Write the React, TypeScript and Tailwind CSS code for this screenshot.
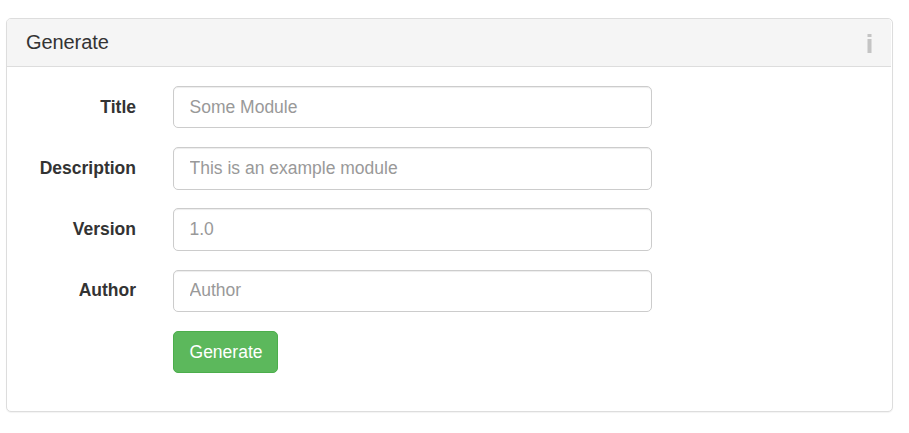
const fields = [
  { label: 'Title', placeholder: 'Some Module' },
  { label: 'Description', placeholder: 'This is an example module' },
  { label: 'Version', placeholder: '1.0' },
  { label: 'Author', placeholder: 'Author' },
];

export default function App() {
  return (
    <div className="h-[433px] bg-white pl-[6px] pr-4 pt-[18px] font-['Liberation_Sans',Arial,sans-serif] text-[#333]">
      <section className="h-[394px] rounded-[5px] border border-[#ddd] bg-white shadow-[0_1px_1px_rgba(0,0,0,0.05)]">
        <header className="mr-px flex h-[48px] items-start justify-between rounded-t-[4px] border-b border-[#ddd] bg-[#f5f5f5] pl-[19px] pr-[19px]">
          <h3 className="pt-[12px] text-[20px] leading-[22px] tracking-[-0.08px]">Generate</h3>
          <svg className="mt-[15px] h-[19px] w-[5px]" viewBox="0 0 5 19" fill="#c4c4c4">
            <path d="M0.5 0h4v3h-4zM0.5 5h4v14h-4z" />
          </svg>
        </header>
        <form className="flex flex-col gap-[18.75px] pt-[18.75px]">
          {fields.map((f) => (
            <div key={f.label} className="flex h-[42.5px]">
              <label className="w-[129px] pt-[9.8px] text-right text-[17.5px] font-bold leading-[22px]">{f.label}</label>
              <input
                className="ml-[37px] h-[42.5px] w-[479px] rounded-[5px] border border-[#ccc] bg-white px-[15.5px] text-[17.5px] shadow-[inset_0_1px_1px_rgba(0,0,0,0.075)] placeholder:text-[#999]"
                placeholder={f.placeholder}
              />
            </div>
          ))}
          <button type="button" className="ml-[166px] h-[42.5px] w-[105px] rounded-[5px] border border-[#4cae4c] bg-[#5cb85c] pl-px text-[17.5px] text-white">
            Generate
          </button>
        </form>
      </section>
    </div>
  );
}
